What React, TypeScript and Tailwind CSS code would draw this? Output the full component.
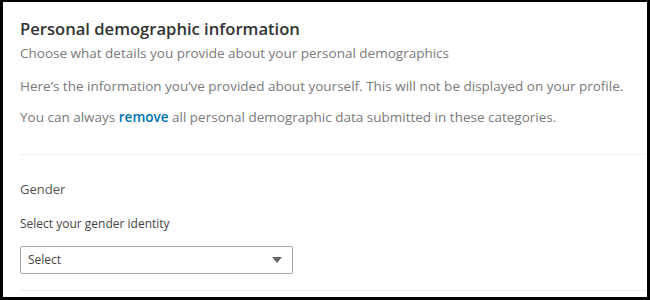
export default function App() {
  return (
    <div
      className="w-[650px] h-[300px] overflow-hidden bg-white border-black border-t-2 border-l-[3px] border-r-[3px] border-b-[3px]"
      style={{ fontFamily: "'Open Sans', 'Noto Sans', sans-serif" }}
    >
      <div className="flex flex-col pl-[17px] pt-[15px]">
        {/* Header */}
        <h1 className="text-[16.6px] leading-[24px] font-semibold text-[#333]">
          Personal demographic information
        </h1>
        <p className="mt-[2px] text-[13.5px] leading-[20px] text-[#7a7a7a]">
          Choose what details you provide about your personal demographics
        </p>
        <p className="mt-[13px] text-[13.5px] leading-[20px] text-[#7a7a7a]">
          Here’s the information you’ve provided about yourself. This will not be displayed on your profile.
        </p>
        <p className="mt-[11px] text-[13.5px] leading-[20px] text-[#7a7a7a]">
          You can always{' '}
          <a className="font-semibold text-[#0073b1]">remove</a>{' '}
          all personal demographic data submitted in these categories.
        </p>

        <div className="mt-[27px] h-px bg-[#f1f1f1]" />

        {/* Gender */}
        <h2 className="mt-[24px] text-[13px] leading-[20px] text-[#555]">Gender</h2>
        <label className="mt-[17px] text-[12px] leading-[16px] text-[#444]">
          Select your gender identity
        </label>
        <div className="mt-[14px] w-[273px] h-[28px] flex items-center justify-between pl-[7px] pr-[10px] border border-[#a6a6a6] rounded-[2px]">
          <span className="text-[12px] text-[#444]">Select</span>
          <svg width="10" height="6" viewBox="0 0 10 6">
            <path d="M0 0 H10 L5 6 Z" fill="#666" />
          </svg>
        </div>

        <div className="mt-[16px] h-px bg-[#ececec]" />
      </div>
    </div>
  );
}
